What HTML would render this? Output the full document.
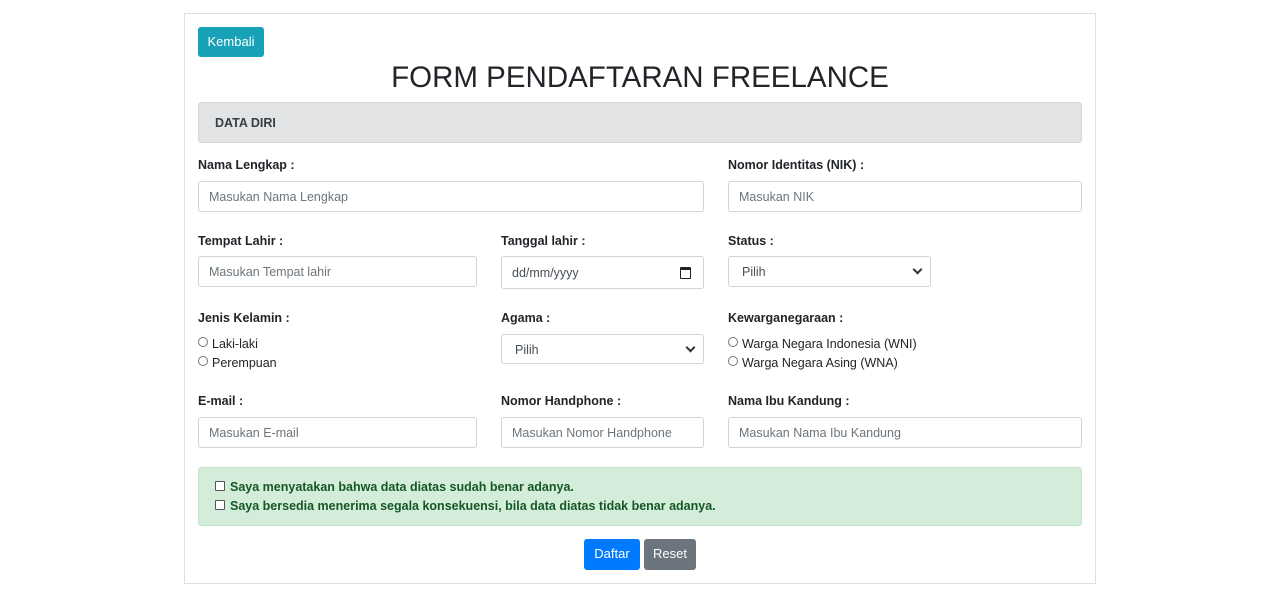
<!DOCTYPE html>
<html><head><style>
body{margin:0;width:1280px;height:600px;background:#fff;font-family:"Liberation Sans",sans-serif;color:#212529;position:relative;overflow:hidden}
.a{position:absolute}
.card{left:184px;top:13px;width:910px;height:569px;border:1px solid #dfdfdf}
.lbl{font-size:12.5px;font-weight:bold;white-space:nowrap}
.in{border:1px solid #ced4da;border-radius:3px;box-sizing:border-box;height:31px;font-size:12.5px;color:#6c757d;padding-left:10px;line-height:30px;white-space:nowrap}
.sel{color:#495057;padding-left:13px}
.chev{position:absolute;right:9px;top:9px;width:5px;height:5px;border-right:2px solid #333;border-bottom:2px solid #333;transform:rotate(45deg)}
.rad{font-size:12.5px;color:#212529;white-space:nowrap}
.rad i{display:inline-block;width:8px;height:8px;border:1px solid #777;border-radius:50%;margin-right:4px;vertical-align:1px}
.cb{display:inline-block;width:8px;height:8px;border:1px solid #555;border-radius:1px;margin-right:5px;vertical-align:0;background:#fff}
.btn{color:#fff;font-size:13px;text-align:center;border-radius:3px;line-height:30px}
</style></head><body>
<div class="a card"></div>
<div class="a btn" style="left:198px;top:27px;width:66px;height:30px;background:#17a2b8">Kembali</div>
<div class="a" style="left:184px;width:912px;top:58px;text-align:center;font-size:29.5px;line-height:40px;font-weight:500">FORM PENDAFTARAN FREELANCE</div>
<div class="a" style="left:198px;top:102px;width:882px;height:39px;background:#e2e3e5;border:1px solid #d6d8db;border-radius:3px"></div>
<div class="a lbl" style="left:215px;top:116px;color:#383d41">DATA DIRI</div>

<div class="a lbl" style="left:198px;top:158px">Nama Lengkap :</div>
<div class="a in" style="left:198px;top:181px;width:506px">Masukan Nama Lengkap</div>
<div class="a lbl" style="left:728px;top:158px">Nomor Identitas (NIK) :</div>
<div class="a in" style="left:728px;top:181px;width:354px">Masukan NIK</div>

<div class="a lbl" style="left:198px;top:234px">Tempat Lahir :</div>
<div class="a in" style="left:198px;top:256px;width:279px">Masukan Tempat lahir</div>
<div class="a lbl" style="left:501px;top:234px">Tanggal lahir :</div>
<div class="a in" style="left:501px;top:256px;width:203px;height:33px;line-height:32px;color:#495057">dd/mm/yyyy<span class="a" style="right:12px;top:10px;width:9px;height:8px;border:1.5px solid #222;border-top-width:3px;border-radius:1px"></span></div>
<div class="a lbl" style="left:728px;top:234px">Status :</div>
<div class="a in sel" style="left:728px;top:256px;width:203px">Pilih<span class="chev"></span></div>

<div class="a lbl" style="left:198px;top:311px">Jenis Kelamin :</div>
<div class="a rad" style="left:198px;top:337px"><i></i>Laki-laki</div>
<div class="a rad" style="left:198px;top:356px"><i></i>Perempuan</div>
<div class="a lbl" style="left:501px;top:311px">Agama :</div>
<div class="a in sel" style="left:501px;top:334px;width:203px;height:30px">Pilih<span class="chev"></span></div>
<div class="a lbl" style="left:728px;top:311px">Kewarganegaraan :</div>
<div class="a rad" style="left:728px;top:337px"><i></i>Warga Negara Indonesia (WNI)</div>
<div class="a rad" style="left:728px;top:356px"><i></i>Warga Negara Asing (WNA)</div>

<div class="a lbl" style="left:198px;top:394px">E-mail :</div>
<div class="a in" style="left:198px;top:417px;width:279px">Masukan E-mail</div>
<div class="a lbl" style="left:501px;top:394px">Nomor Handphone :</div>
<div class="a in" style="left:501px;top:417px;width:203px">Masukan Nomor Handphone</div>
<div class="a lbl" style="left:728px;top:394px">Nama Ibu Kandung :</div>
<div class="a in" style="left:728px;top:417px;width:354px">Masukan Nama Ibu Kandung</div>

<div class="a" style="left:198px;top:467px;width:882px;height:57px;background:#d4edda;border:1px solid #c3e6cb;border-radius:3px"></div>
<div class="a lbl" style="left:215px;top:480px;color:#155724"><span class="cb"></span>Saya menyatakan bahwa data diatas sudah benar adanya.</div>
<div class="a lbl" style="left:215px;top:499px;color:#155724"><span class="cb"></span>Saya bersedia menerima segala konsekuensi, bila data diatas tidak benar adanya.</div>

<div class="a btn" style="left:584px;top:539px;width:56px;height:31px;background:#007bff">Daftar</div>
<div class="a btn" style="left:644px;top:539px;width:52px;height:31px;background:#6c757d">Reset</div>
</body></html>
